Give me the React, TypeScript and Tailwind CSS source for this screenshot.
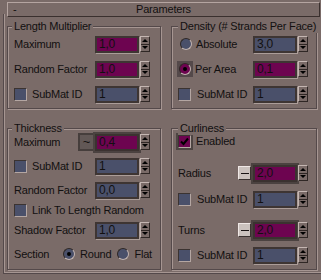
import React from "react";

// etched frame colours
const groupBox =
  "relative border border-[#54494a] shadow-[inset_1px_1px_0_#a69692,1px_1px_0_#a69692]";

const Spinner = () => (
  <div className="ml-[1px] flex h-[16px] w-[10px] flex-col border border-t-[#c4b6b2] border-l-[#c4b6b2] border-b-[#2f2725] border-r-[#2f2725]">
    <div className="flex flex-1 items-center justify-center border-b border-b-[#2f2725]">
      <div className="h-0 w-0 border-x-[3px] border-b-[3px] border-x-transparent border-b-black" />
    </div>
    <div className="flex flex-1 items-center justify-center">
      <div className="h-0 w-0 border-x-[3px] border-t-[3px] border-x-transparent border-t-black" />
    </div>
  </div>
);

type FieldProps = { value: string; maroon?: boolean; hi?: boolean };

const Field = ({ value, maroon, hi }: FieldProps) => {
  if (hi)
    return (
      <div className="h-[17px] w-[44px] border-2 border-[#3b3230] bg-[#6d0450] pl-[2px] text-[12px] leading-[13px] outline-2 outline-[#4b4240] shadow-[1px_1px_0_#ab9d99]">
        {value}
      </div>
    );
  return (
    <div
      className={`h-[17px] w-[44px] border-2 border-[#3e3533] pl-[2px] text-[12px] leading-[13px] shadow-[1px_1px_0_#ab9d99] ${
        maroon ? "bg-[#6d0450]" : "bg-[#4a506a]"
      }`}
    >
      {value}
    </div>
  );
};

const Check = () => (
  <div className="h-[13px] w-[13px] shrink-0 border border-t-[#3b3331] border-l-[#3b3331] border-b-[#b4a6a2] border-r-[#b4a6a2] bg-[#4a506a]" />
);

const Radio = ({ on, maroon }: { on?: boolean; maroon?: boolean }) => (
  <div
    className={`flex h-[12px] w-[12px] shrink-0 items-center justify-center rounded-full border border-t-[#2f2826] border-l-[#2f2826] border-b-[#c2b4b0] border-r-[#c2b4b0] ${
      maroon ? "bg-[#6d0450]" : "bg-[#4a506a]"
    }`}
  >
    {on && <div className="h-[4px] w-[4px] rounded-full bg-black" />}
  </div>
);

const Dash = () => (
  <div className="mr-[2px] flex h-[14px] w-[13px] items-center justify-center border border-t-[#f0e8e6] border-l-[#f0e8e6] border-b-[#3a3230] border-r-[#3a3230] bg-[#cbc2be]">
    <div className="h-px w-[8px] bg-[#1a1414]" />
  </div>
);

const Title = ({ children, right }: { children: React.ReactNode; right?: boolean }) => (
  <div
    className={`absolute -top-[7px] whitespace-nowrap bg-[#7a6b68] px-[2px] leading-[13px] ${
      right ? "left-[6px]" : "left-[4px]"
    }`}
  >
    {children}
  </div>
);

const LeftRow = ({ label, children }: { label: React.ReactNode; children: React.ReactNode }) => (
  <div className="flex h-[24px] items-center pl-[6px] pr-[10px]">
    <div className="flex flex-1 items-center whitespace-nowrap">{label}</div>
    {children}
    <Spinner />
  </div>
);

const RightRow = ({ label, children, h = "h-[24px]" }: { label: React.ReactNode; children: React.ReactNode; h?: string }) => (
  <div className={`flex ${h} items-center pl-[6px] pr-[8px]`}>
    <div className="flex flex-1 items-center whitespace-nowrap">{label}</div>
    {children}
    <Spinner />
  </div>
);

export default function App() {
  return (
    <div className="h-[280px] w-[321px] overflow-hidden bg-[#7a6b68] font-['Liberation_Sans',Arial,sans-serif] text-[11px] tracking-[-0.2px] text-[#121010]">
      {/* rollout header */}
      <div className="ml-[7px] mt-[2px] grid h-[15px] w-[313px] grid-cols-[1fr_auto_1fr] items-center border border-t-[#b5a5a1] border-l-[#b5a5a1] border-b-[#3a302e] border-r-[#3a302e] leading-[13px]">
        <span className="pl-[5px]">-</span>
        <span>Parameters</span>
        <span />
      </div>

      {/* rollout body */}
      <div className="-mt-[3px] ml-[3px] flex h-[260px] gap-[10px] border-b border-l border-[#54494a] pl-[3px] pt-[12px] shadow-[inset_1px_-1px_0_#a69692]">
        {/* left column */}
        <div className="flex w-[154px] flex-col gap-[19px]">
          <div className={`${groupBox} flex flex-col gap-[1px] pb-[2px] pt-[5px]`}>
            <Title>Length Multiplier</Title>
            <LeftRow label="Maximum">
              <Field value="1,0" maroon />
            </LeftRow>
            <LeftRow label="Random Factor">
              <Field value="1,0" maroon />
            </LeftRow>
            <LeftRow
              label={
                <>
                  <Check />
                  <span className="ml-[5px]">SubMat ID</span>
                </>
              }
            >
              <Field value="1" />
            </LeftRow>
          </div>

          <div className={`${groupBox} flex flex-col pb-[3px] pt-[1px]`}>
            <Title>Thickness</Title>
            <LeftRow label="Maximum">
              <div className="mr-[2px] flex h-[14px] w-[13px] items-center justify-center bg-[#625856] text-[13px] leading-[14px] outline-2 outline-[#463e3c]">
                ~
              </div>
              <Field value="0,4" hi />
            </LeftRow>
            <LeftRow
              label={
                <>
                  <Check />
                  <span className="ml-[5px]">SubMat ID</span>
                </>
              }
            >
              <Field value="1" />
            </LeftRow>
            <LeftRow label="Random Factor">
              <Field value="0,0" />
            </LeftRow>
            <div className="flex h-[16px] items-center whitespace-nowrap pl-[6px]">
              <Check />
              <span className="ml-[5px]">Link To Length Random</span>
            </div>
            <LeftRow label="Shadow Factor">
              <Field value="1,0" />
            </LeftRow>
            <div className="flex h-[24px] items-center whitespace-nowrap pl-[6px]">
              <span className="w-[49px]">Section</span>
              <Radio on />
              <span className="ml-[5px]">Round</span>
              <div className="ml-[6px]">
                <Radio />
              </div>
              <span className="ml-[5px]">Flat</span>
            </div>
          </div>
        </div>

        {/* right column */}
        <div className="flex w-[146px] flex-col gap-[19px]">
          <div className={`${groupBox} flex flex-col gap-[1px] pb-[2px] pt-[5px]`}>
            <Title right>Density (# Strands Per Face)</Title>
            <RightRow
              label={
                <>
                  <div className="ml-[2px]">
                    <Radio />
                  </div>
                  <span className="ml-[4px]">Absolute</span>
                </>
              }
            >
              <Field value="3,0" />
            </RightRow>
            <RightRow
              label={
                <>
                  <div className="-ml-[1px] bg-[#54494a] p-[2px]">
                    <Radio on maroon />
                  </div>
                  <span className="ml-[2px]">Per Area</span>
                </>
              }
            >
              <Field value="0,1" maroon />
            </RightRow>
            <RightRow
              label={
                <>
                  <Check />
                  <span className="ml-[6px]">SubMat ID</span>
                </>
              }
            >
              <Field value="1" />
            </RightRow>
          </div>

          <div className={`${groupBox} flex flex-col pb-[2px] pt-[1px]`}>
            <Title right>Curliness</Title>
            <div className="flex h-[22px] items-center pl-[4px]">
              <div className="bg-[#4e4543] p-[2px]">
                <div className="flex h-[13px] w-[13px] items-center justify-center border border-t-[#3b3331] border-l-[#3b3331] border-b-[#b4a6a2] border-r-[#b4a6a2] bg-[#6d0450]">
                  <svg width="9" height="9" viewBox="0 0 9 9">
                    <path d="M1 4.5 L3.5 7 L8 1.5" stroke="#000" strokeWidth="2" fill="none" />
                  </svg>
                </div>
              </div>
              <span className="ml-[3px]">Enabled</span>
            </div>
            <div className="mt-[9px]">
              <RightRow label="Radius">
                <Dash />
                <Field value="2,0" hi />
              </RightRow>
            </div>
            <div className="mt-[2px]">
              <RightRow
                label={
                  <>
                    <Check />
                    <span className="ml-[6px]">SubMat ID</span>
                  </>
                }
              >
                <Field value="1" />
              </RightRow>
            </div>
            <div className="mt-[7px]">
              <RightRow label="Turns">
                <Dash />
                <Field value="2,0" hi />
              </RightRow>
            </div>
            <div className="mt-[1px]">
              <RightRow
                label={
                  <>
                    <Check />
                    <span className="ml-[6px]">SubMat ID</span>
                  </>
                }
              >
                <Field value="1" />
              </RightRow>
            </div>
          </div>
        </div>
      </div>
    </div>
  );
}
